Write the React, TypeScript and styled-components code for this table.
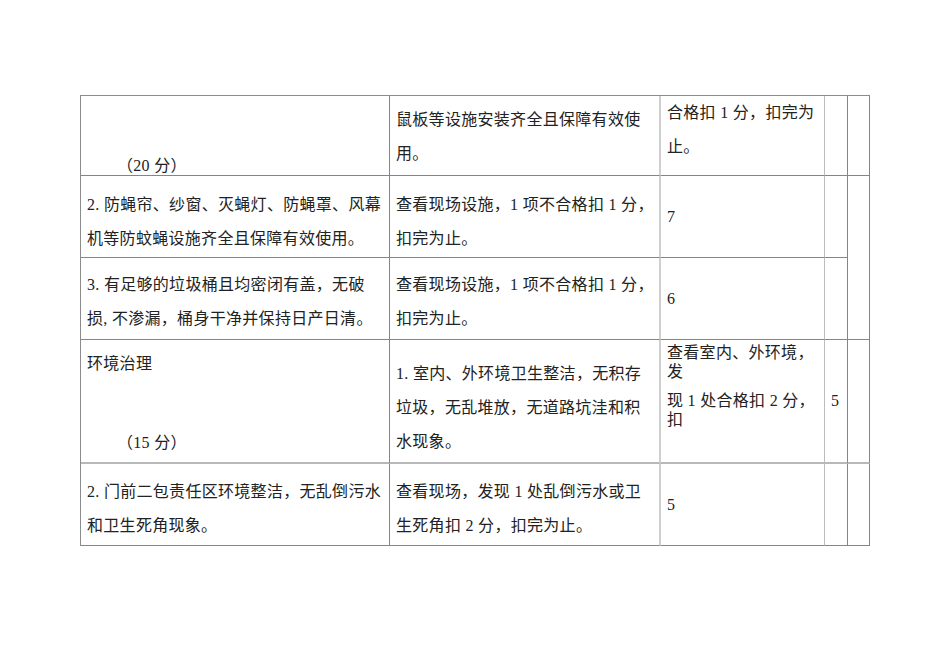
import React from 'react';
import styled, { createGlobalStyle } from 'styled-components';

const GlobalStyle = createGlobalStyle`
  * { box-sizing: border-box; }
  html, body {
    margin: 0;
    padding: 0;
    background: #ffffff;
  }
  body {
    font-family: "Liberation Serif", "Noto Sans CJK SC", serif;
    color: #222222;
  }
`;

const Page = styled.div`
  width: 950px;
  height: 672px;
  padding: 95px 0 0 80px;
`;

const Sheet = styled.table`
  border-collapse: separate;
  border-spacing: 0;
  table-layout: fixed;
  width: 790px;
  border-top: 1px solid #8c8c8c;
  border-left: 1px solid #8c8c8c;
  font-size: 16px;
  letter-spacing: 0.3px;
`;

const Col = styled.col<{ $w: number }>`
  width: ${p => p.$w}px;
`;

const Row = styled.tr<{ $h: number }>`
  height: ${p => p.$h}px;
`;

type Edge = 'dark' | 'light' | 'pale' | 'soft';

const EDGES: Record<Edge, string> = {
  dark: '1px solid #858585',
  light: '2px solid #cfcfcf',
  pale: '1px solid #bcbcbc',
  soft: '2px solid #b8b8b8',
};

const Cell = styled.td<{
  $pt?: number;
  $align?: 'top' | 'middle' | 'bottom';
  $right?: Edge;
  $bottom?: Edge;
}>`
  padding: ${p => p.$pt ?? 0}px 2px 0 6px;
  vertical-align: ${p => p.$align ?? 'top'};
  border-right: ${p => EDGES[p.$right ?? 'dark']};
  border-bottom: ${p => EDGES[p.$bottom ?? 'dark']};
  line-height: 34px;
  white-space: nowrap;
  overflow: hidden;
`;

const Line = styled.div``;

const Score = styled.div<{ $indent: number; $mt?: number }>`
  padding-left: ${p => p.$indent}px;
  margin-top: ${p => p.$mt ?? 0}px;
  line-height: 16px;
  padding-bottom: 1px;
`;

const Tight = styled.div<{ $mt?: number }>`
  line-height: 19px;
  margin-top: ${p => p.$mt ?? 0}px;
`;

const COLS = [309, 271, 164, 23, 22];

export default function App() {
  return (
    <Page>
      <GlobalStyle />
      <Sheet>
        <colgroup>
          {COLS.map((w, i) => <Col key={i} $w={w} />)}
        </colgroup>
        <tbody>
          <Row $h={80}>
            <Cell $align="bottom">
              <Score $indent={30}>（20 分）</Score>
            </Cell>
            <Cell $pt={7} $right="light">
              <Line>鼠板等设施安装齐全且保障有效使</Line>
              <Line>用。</Line>
            </Cell>
            <Cell $right="pale">
              <Line>合格扣 1 分，扣完为</Line>
              <Line>止。</Line>
            </Cell>
            <Cell />
            <Cell />
          </Row>

          <Row $h={82}>
            <Cell $pt={12}>
              <Line>2. 防蝇帘、纱窗、灭蝇灯、防蝇罩、风幕</Line>
              <Line>机等防蚊蝇设施齐全且保障有效使用。</Line>
            </Cell>
            <Cell $pt={12} $right="light">
              <Line>查看现场设施，1 项不合格扣 1 分，</Line>
              <Line>扣完为止。</Line>
            </Cell>
            <Cell $align="middle" $right="pale">7</Cell>
            <Cell />
            <Cell rowSpan={2} />
          </Row>

          <Row $h={82}>
            <Cell $pt={10}>
              <Line>3. 有足够的垃圾桶且均密闭有盖，无破</Line>
              <Line>损, 不渗漏，桶身干净并保持日产日清。</Line>
            </Cell>
            <Cell $pt={10} $right="light">
              <Line>查看现场设施，1 项不合格扣 1 分，</Line>
              <Line>扣完为止。</Line>
            </Cell>
            <Cell $align="middle" $right="pale">6</Cell>
            <Cell />
          </Row>

          <Row $h={124}>
            <Cell $pt={7} $bottom="soft">
              <Line>环境治理</Line>
              <Score $indent={30} $mt={54}>（15 分）</Score>
            </Cell>
            <Cell $pt={17} $right="light" $bottom="soft">
              <Line>1. 室内、外环境卫生整洁，无积存</Line>
              <Line>垃圾，无乱堆放，无道路坑洼和积</Line>
              <Line>水现象。</Line>
            </Cell>
            <Cell $pt={3} $right="pale" $bottom="soft">
              <Tight>查看室内、外环境，</Tight>
              <Tight>发</Tight>
              <Tight $mt={10}>现 1 处合格扣 2 分，</Tight>
              <Tight>扣</Tight>
            </Cell>
            <Cell $align="middle" $bottom="soft">5</Cell>
            <Cell $bottom="soft" />
          </Row>

          <Row $h={82}>
            <Cell $pt={11}>
              <Line>2. 门前二包责任区环境整洁，无乱倒污水</Line>
              <Line>和卫生死角现象。</Line>
            </Cell>
            <Cell $pt={11} $right="light">
              <Line>查看现场，发现 1 处乱倒污水或卫</Line>
              <Line>生死角扣 2 分，扣完为止。</Line>
            </Cell>
            <Cell $align="middle" $right="pale">5</Cell>
            <Cell />
            <Cell />
          </Row>
        </tbody>
      </Sheet>
    </Page>
  );
}
